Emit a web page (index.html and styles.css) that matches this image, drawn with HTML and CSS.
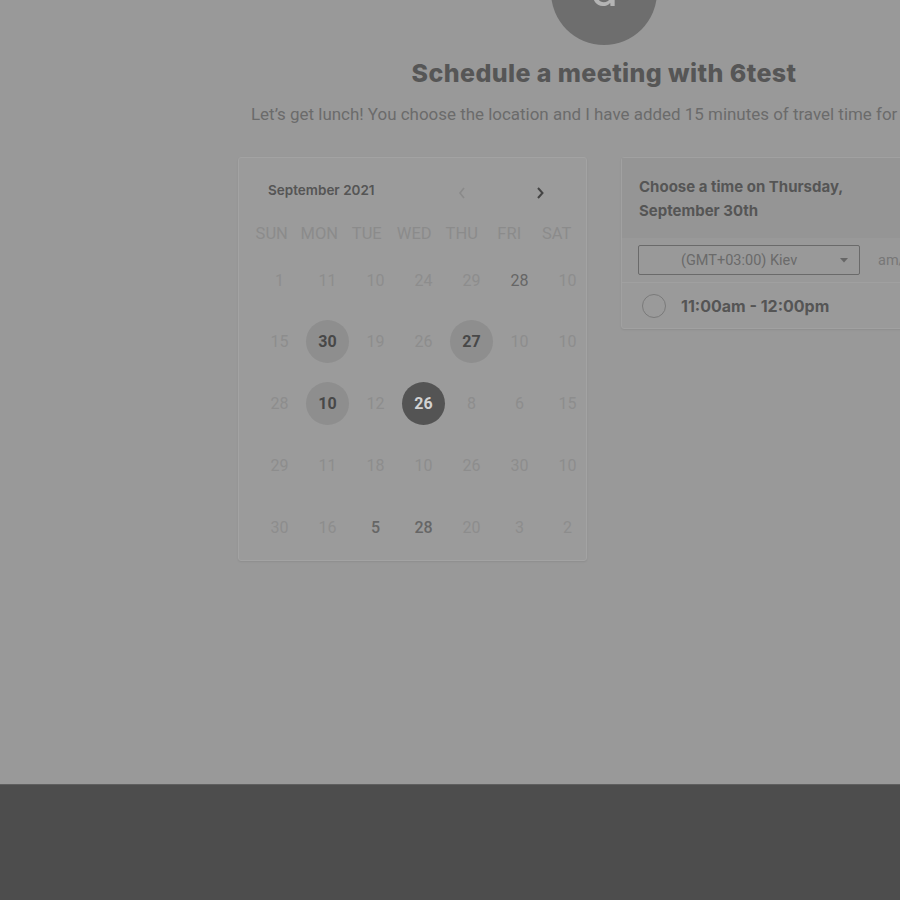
FILE: index.html
```html
<!DOCTYPE html>
<html lang="en">
<head>
<meta charset="utf-8">
<title>Schedule a meeting with 6test</title>
<link rel="stylesheet" href="styles.css">
</head>
<body>
<div class="page">
  <main class="main">
    <div class="avatar"><span>d</span></div>
    <h1 class="title">Schedule a meeting with 6test</h1>
    <p class="subtitle">Let’s get lunch! You choose the location and I have added 15 minutes of travel time for you.</p>
    <div class="content">
      <section class="calendar">
        <div class="cal-head">
          <span class="cal-month">September 2021</span>
          <span class="arrow prev">
            <svg width="10" height="14" viewBox="0 0 10 14"><path d="M7 2 L3 7 L7 12" fill="none" stroke="#8a8a8a" stroke-width="1.6"/></svg>
          </span>
          <span class="arrow next">
            <svg width="10" height="14" viewBox="0 0 10 14"><path d="M3 2 L7.5 7 L3 12" fill="none" stroke="#444" stroke-width="2"/></svg>
          </span>
        </div>
        <div class="weekdays">
          <span>Sun</span><span>Mon</span><span>Tue</span><span>Wed</span><span>Thu</span><span>Fri</span><span>Sat</span>
        </div>
        <div class="days">
          <span class="day">1</span><span class="day">11</span><span class="day">10</span><span class="day">24</span><span class="day">29</span><span class="day on">28</span><span class="day">10</span>
          <span class="day">15</span><span class="day avail">30</span><span class="day">19</span><span class="day">26</span><span class="day avail">27</span><span class="day">10</span><span class="day">10</span>
          <span class="day">28</span><span class="day avail">10</span><span class="day">12</span><span class="day selected">26</span><span class="day">8</span><span class="day">6</span><span class="day">15</span>
          <span class="day">29</span><span class="day">11</span><span class="day">18</span><span class="day">10</span><span class="day">26</span><span class="day">30</span><span class="day">10</span>
          <span class="day">30</span><span class="day">16</span><span class="day on strong">5</span><span class="day on strong">28</span><span class="day">20</span><span class="day">3</span><span class="day">2</span>
        </div>
      </section>
      <section class="times">
        <div class="times-head">Choose a time on Thursday, September 30th</div>
        <div class="tz-row">
          <div class="tz-select">
            <span>(GMT+03:00) Kiev</span>
            <svg class="caret" width="8" height="5" viewBox="0 0 8 5"><path d="M0 0 H8 L4 4.5 Z" fill="#666"/></svg>
          </div>
          <span class="ampm">am/pm</span>
        </div>
        <div class="slot">
          <span class="radio"></span>
          <span class="slot-text">11:00am - 12:00pm</span>
        </div>
      </section>
    </div>
  </main>
</div>
<footer class="footer"></footer>
</body>
</html>
```

FILE: styles.css
```css
html, body {
  margin: 0;
  padding: 0;
}
body {
  background: #999999;
  height: 900px;
  overflow: hidden;
  font-family: Roboto, "Liberation Sans", sans-serif;
  display: flex;
  flex-direction: column;
}
.page {
  height: 784px;
  overflow: hidden;
  flex: none;
}
.footer {
  flex: 1;
  background: #4d4d4d;
  border-top: 1px solid #5f5f5f;
}
.main {
  margin-left: 238px;
  width: 732px;
  display: flex;
  flex-direction: column;
  align-items: center;
}
.avatar {
  width: 106px;
  height: 106px;
  border-radius: 50%;
  background: #6e6e6e;
  margin-top: -61px;
  display: flex;
  align-items: center;
  justify-content: center;
}
.avatar span {
  color: #b4b4b4;
  font-size: 50px;
  line-height: 1;
  font-family: Roboto, "Liberation Sans", sans-serif;
  margin-top: -6px;
}
.title {
  margin: 13px 0 0;
  font-family: Inter, "Liberation Sans", sans-serif;
  font-weight: 800;
  font-size: 25px;
  letter-spacing: 0.4px;
  line-height: 30px;
  color: #565656;
}
.subtitle {
  margin: 15px 0 0;
  font-size: 16.95px;
  line-height: 22px;
  color: #6b6b6b;
  white-space: nowrap;
  align-self: flex-start;
  padding-left: 13px;
}
.content {
  margin-top: 32px;
  display: flex;
  gap: 34px;
  align-self: stretch;
  align-items: flex-start;
}
.calendar {
  width: 347px;
  height: 402px;
  background: #9b9b9b;
  border: 1px solid #a3a3a3;
  border-radius: 3px;
  box-shadow: 0 1px 2px rgba(0,0,0,0.08);
  flex: none;
}
.cal-head {
  display: flex;
  align-items: center;
  padding: 25px 31px 0 29px;
  height: 20px;
}
.cal-month {
  flex: 1;
  font-family: Inter, "Liberation Sans", sans-serif;
  font-weight: 600;
  font-size: 13.5px;
  color: #555;
  margin-top: -6px;
}
.arrow {
  width: 30px;
  display: flex;
  justify-content: center;
}
.arrow.prev {
  margin-right: 48px;
}
.weekdays {
  display: grid;
  grid-template-columns: repeat(7, 47.5px);
  padding-left: 9px;
  margin-top: 21px;
}
.weekdays span {
  text-align: center;
  text-transform: uppercase;
  font-size: 16.5px;
  line-height: 20px;
  color: #8b8b8b;
}
.days {
  display: grid;
  grid-template-columns: repeat(7, 43px);
  grid-auto-rows: 43px;
  column-gap: 5px;
  row-gap: 18.75px;
  padding-left: 19px;
  margin-top: 14.5px;
}
.day {
  display: flex;
  align-items: center;
  justify-content: center;
  border-radius: 50%;
  font-size: 16px;
  color: #8d8d8d;
}
.day.on {
  color: #666;
}
.day.strong {
  font-weight: 500;
}
.day.avail {
  background: #8e8e8e;
  color: #484848;
  font-weight: 700;
}
.day.selected {
  background: #545454;
  color: #d2d2d2;
  font-weight: 700;
}
.times {
  width: 349px;
  flex: none;
  background: #9a9a9a;
  border: 1px solid #a1a1a1;
  border-radius: 3px;
  box-shadow: 0 1px 2px rgba(0,0,0,0.08);
  font-family: Inter, "Liberation Sans", sans-serif;
}
.times-head {
  background: #959595;
  padding: 17px 80px 15px 17px;
  height: 48px;
  font-weight: 700;
  font-size: 15px;
  line-height: 24px;
  color: #555;
}
.tz-row {
  height: 44px;
  display: flex;
  align-items: center;
  padding-left: 16px;
  background: #999;
  border-bottom: 1px solid #a0a0a0;
}
.tz-select {
  box-sizing: border-box;
  width: 222px;
  height: 30px;
  border: 1px solid #6a6a6a;
  border-radius: 2px;
  display: flex;
  align-items: center;
  padding-left: 42px;
  font-family: Roboto, "Liberation Sans", sans-serif;
  font-size: 14.5px;
  color: #6a6a6a;
}
.tz-select span {
  flex: 1;
}
.caret {
  margin-right: 11px;
}
.ampm {
  margin-left: 18px;
  font-family: Roboto, "Liberation Sans", sans-serif;
  font-size: 14.5px;
  color: #777;
}
.slot {
  height: 45px;
  display: flex;
  align-items: center;
  padding-left: 20px;
}
.radio {
  width: 22px;
  height: 22px;
  border: 1.5px solid #7a7a7a;
  border-radius: 50%;
  flex: none;
}
.slot-text {
  margin-left: 15px;
  font-weight: 700;
  font-size: 16px;
  color: #555;
}
```
